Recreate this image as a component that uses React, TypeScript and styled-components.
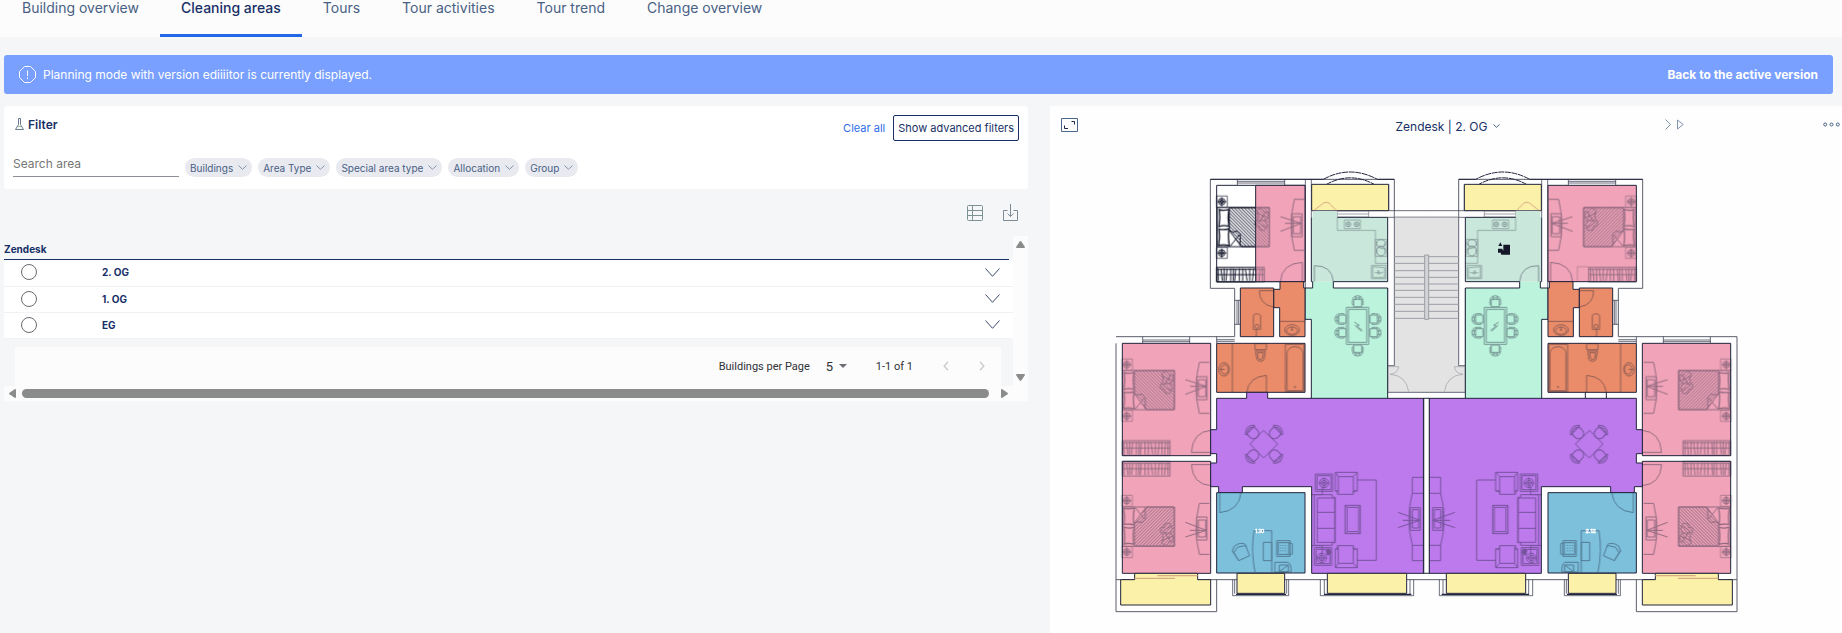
import React from "react";
import styled, { createGlobalStyle, css } from "styled-components";

const navy = "#172f66";
const slate = "#486084";

const GlobalStyle = createGlobalStyle`
  * { box-sizing: border-box; }
  body {
    margin: 0;
    background: #f5f6f8;
    color: ${navy};
    font-family: Inter, "Liberation Sans", sans-serif;
    font-size: 12px;
  }
  button, input, select { font-family: inherit; }
`;

const buttonReset = css`
  padding: 0;
  border: 0;
  background: none;
  cursor: pointer;
`;

const Page = styled.div`
  min-height: 100vh;
  overflow: hidden;
  display: flex;
  flex-direction: column;
`;

const TabBar = styled.nav`
  display: flex;
  height: 37px;
  padding-left: 1px;
  background: #fcfcfc;
`;

const Tab = styled.a<{ $active?: boolean }>`
  padding: 0 21px;
  line-height: 16px;
  font-size: 14px;
  text-decoration: none;
  white-space: nowrap;
  color: ${(p) => (p.$active ? navy : slate)};
  font-weight: ${(p) => (p.$active ? 500 : 400)};
  border-bottom: 3px solid ${(p) => (p.$active ? "#2168e8" : "transparent")};
`;

const Banner = styled.div`
  display: flex;
  align-items: center;
  gap: 7px;
  height: 39px;
  margin: 18px 9px 12px 4px;
  padding: 0 15px;
  border-radius: 3px;
  background: #7aa0ff;
  color: #fff;
  font-size: 12px;
`;

const BannerAction = styled.button`
  ${buttonReset}
  margin-left: auto;
  color: #fff;
  font-size: 12px;
  font-weight: 700;
`;

const Columns = styled.main`
  flex: 1;
  display: grid;
  grid-template-columns: minmax(0, 128fr) minmax(0, 99fr);
  gap: 22px;
  padding-left: 4px;
`;

const FilterCard = styled.section`
  height: 83px;
  padding: 9px 9px 0;
  border-radius: 3px;
  background: #fff;
`;

const FilterHead = styled.div`
  display: flex;
  align-items: center;
  height: 26px;
`;

const FilterTitle = styled.h2`
  display: flex;
  align-items: center;
  gap: 4px;
  margin: 0 auto 8px 2px;
  font-size: 12px;
  font-weight: 600;
`;

const ClearButton = styled.button`
  ${buttonReset}
  margin-right: 8px;
  color: #2f6bea;
  font-size: 11px;
`;

const OutlineButton = styled.button`
  height: 26px;
  padding: 0 4px;
  border: 1px solid ${navy};
  border-radius: 2px;
  background: #fff;
  color: ${navy};
  font-size: 11px;
  cursor: pointer;
`;

const FilterRow = styled.div`
  display: flex;
  align-items: flex-end;
  gap: 6px;
  height: 36px;
`;

const SearchInput = styled.input`
  width: 166px;
  height: 24px;
  padding: 0 0 2px;
  border: 0;
  border-bottom: 1px solid #8b8e99;
  outline: 0;
  font-size: 12px;
  color: ${navy};
  &::placeholder { color: #767676; opacity: 1; }
`;

const Chip = styled.button`
  ${buttonReset}
  display: flex;
  align-items: center;
  gap: 5px;
  height: 19px;
  padding: 0 5px;
  border-radius: 10px;
  background: #e8eaf0;
  color: ${slate};
  font-size: 10px;
  white-space: nowrap;
`;

const Toolbar = styled.div`
  display: flex;
  justify-content: flex-end;
  gap: 20px;
  height: 47px;
  padding: 15px 10px 0 0;
`;

const IconButton = styled.button`
  ${buttonReset}
  display: flex;
  align-items: center;
  justify-content: center;
  height: 17px;
  color: ${slate};
`;

const ScrollFrame = styled.section`
  display: grid;
  grid-template-columns: minmax(0, 1fr) 15px;
  grid-template-rows: auto 15px;
  background: #fcfcfc;
`;

const ScrollContent = styled.div`
  background: #f5f6f8;
`;

const AreaTable = styled.table`
  width: 100%;
  border-collapse: collapse;
  font-size: 10px;
  font-weight: 700;
  caption {
    height: 24px;
    margin-right: 4px;
    padding-top: 5px;
    border-bottom: 1px solid ${navy};
    line-height: 16px;
    text-align: left;
  }
`;

const AreaRow = styled.tr`
  height: 26px;
  background: #fff;
  border-bottom: 1px solid #f2f2f4;
  td { padding: 0 0 1px; vertical-align: middle; }
  td:first-child { width: 98px; padding-left: 17px; }
  td:last-child { width: 28px; }
`;

const Radio = styled.input`
  display: block;
  appearance: none;
  width: 16px;
  height: 16px;
  margin: 0;
  border: 1px solid #686a70;
  border-radius: 50%;
  background: #fff;
`;

const Pagination = styled.div`
  display: flex;
  align-items: center;
  justify-content: flex-end;
  height: 39px;
  margin: 8px 12px 0 11px;
  padding-right: 16px;
  background: #fcfcfc;
  color: #303136;
  font-family: Roboto, sans-serif;
  font-size: 11px;
`;

const PageSize = styled.span`
  display: flex;
  align-items: center;
  gap: 5px;
  margin: 0 29px 0 16px;
`;

const PageSelect = styled.select`
  appearance: none;
  padding: 0;
  border: 0;
  background: none;
  color: inherit;
  font-size: 13px;
`;

const PagerButtons = styled.span`
  display: flex;
  gap: 30px;
  margin-left: 30px;
`;

const VerticalBar = styled.div`
  display: flex;
  flex-direction: column;
  align-items: center;
  justify-content: space-between;
  padding: 4px 0;
`;

const HorizontalBar = styled.div`
  display: flex;
  align-items: center;
  gap: 5px;
  padding: 0 4px;
`;

const Thumb = styled.div`
  flex: 1;
  height: 9px;
  margin-right: 6px;
  border-radius: 5px;
  background: #8a8c8b;
`;

const PlanPanel = styled.section`
  background: #fefefe;
`;

const PlanHead = styled.header`
  display: grid;
  grid-template-columns: 1fr auto 1fr;
  align-items: center;
  height: 54px;
  padding: 0 2px 14px 6px;
`;

const PlanTitle = styled.button`
  ${buttonReset}
  display: flex;
  align-items: center;
  gap: 6px;
  color: ${navy};
  font-size: 12px;
`;

const PlanTools = styled.div`
  display: flex;
  align-items: center;
  justify-content: space-between;
  padding: 0 0 3px 5px;
`;

const ActionTools = styled(PlanTools)`
  padding-left: 165px;
`;

const PlanSvg = styled.svg`
  display: block;
  width: 100%;
  height: auto;
`;

const Chevron = ({ w, h, color = slate }: { w: number; h: number; color?: string }) => (
  <svg width={w} height={h} viewBox={`0 0 ${w} ${h}`} fill="none" stroke={color} aria-hidden="true">
    <path d={`M.5 .5L${w / 2} ${h - 0.7}L${w - 0.5} .5`} />
  </svg>
);

const Arrow = ({ turn }: { turn: number }) => (
  <svg width="9" height="9" viewBox="0 0 9 9" fill="#8a8c8b" aria-hidden="true">
    <path transform={`rotate(${turn} 4.5 4.5)`} d="M3.7 1.5Q4.5 .6 5.3 1.5L9 7Q9 8 8 8H1Q0 8 0 7Z" />
  </svg>
);

const wall = "#22253d";
const pink = "#f1a4b9";
const orange = "#ea8c69";
const purple = "#bd7aed";
const yellow = "#fcf1a8";

/** A room outline with its floor colour. */
const Room = ({ d, fill }: { d: string; fill: string }) => (
  <path d={d} fill={fill} stroke={wall} strokeWidth="3" />
);

/** Bed, night stands, pillows and TV board of one bedroom. */
const BedroomSet = () => (
  <g>
    <path d="M352 142H508V260H352Z" />
    <path d="M388 143H508V260H424L388 212Z" fill="url(#hatch)" />
    <path d="M388 212L400 216 410 213 421 222 420 258M391 258L418 224" />
    <path d="M358 149Q371 153 387 148 382 170 387 199 370 194 357 200 361 172 358 149ZM357 207Q371 211 387 206 383 229 388 257 370 252 356 256 361 230 357 207Z" strokeWidth="4" />
    <path d="M470 152Q485 137 492 156 510 151 504 170 502 180 494 180 510 200 493 211 476 214 478 198 462 204 467 183 480 178 470 152ZM472 160L500 172M496 158L474 190M478 190L500 204M494 181L470 183" />
    <path d="M350 108H382V142H350ZM350 262H382V295H350Z" strokeWidth="2" />
    <circle cx="365" cy="125" r="10" /><circle cx="365" cy="125" r="5" /><path d="M352 125H379M365 112V139" />
    <circle cx="365" cy="279" r="10" /><circle cx="365" cy="279" r="5" /><path d="M352 279H379M365 266V293" />
    <path d="M613 118H583Q564 195 583 271H613" />
    <path d="M575 161H606V230H575ZM580 170H602V221H580Z" />
    <path d="M541 170L604 190 541 214M555 190H604" />
  </g>
);

const Wardrobe = ({ x, y }: { x: number; y: number }) => (
  <g transform={`translate(${x} ${y})`}>
    <path d="M0 0H143V44H0ZM0 22H143M0 6H143" />
    <path d="M5 3V41M13 6L17 40M22 3V41M31 4L28 40M42 3V41M50 3V41M57 5L54 41M68 3V41M78 3V41M86 4L91 40M99 3V41M111 3L107 41M119 3V41M130 4L127 41M137 3V41" strokeWidth="3" />
  </g>
);

const DiningChair = ({ x, y, turn }: { x: number; y: number; turn: number }) => (
  <g transform={`translate(${x} ${y}) rotate(${turn})`}>
    <path d="M-12 -8V14H12V-8ZM-16 -4V8H-12M16 -4V8H12M-16 -4Q-15 -18 0 -19 15 -18 16 -4M-12 -6Q-8 -13 0 -13 8 -13 12 -6M-6 -18V-8M6 -18V-8" />
  </g>
);

const RoundChair = ({ x, y, turn }: { x: number; y: number; turn: number }) => (
  <g transform={`translate(${x} ${y}) rotate(${turn})`}>
    <path d="M-14 -10Q-18 8 -11 15L-4 19H4L11 15Q18 8 14 -10ZM-19 -12Q0 -32 19 -12L16 -8Q0 -24 -16 -8Z" />
  </g>
);

const Armchair = ({ flip }: { flip?: boolean }) => (
  <g transform={flip ? "matrix(1 0 0 -1 0 2160)" : undefined}>
    <path d="M706 937H772V993H760V1003H712V993H706ZM715 1000V950H760V1000M706 937L715 950M772 937L760 950M706 993H715M760 993H772" />
  </g>
);

/** One flat; the other one is the same drawing mirrored on the stairwell. */
const Flat = ({ mirrored }: { mirrored?: boolean }) => (
  <g fill="none" stroke={wall} strokeWidth="2">
    <path d="M331 385V58H883V152M331 385H404V530M48 530H404M48 550V1355H350V1259M48 1259H980" stroke="#5c5e6b" strokeWidth="3" />
    {mirrored && <path d="M48 530V550" stroke="#5c5e6b" strokeWidth="3" />}
    <path d="M331 58H670M832 58H883" strokeWidth="3" />
    <path d="M616 58V384M634 58V172M866 73V152M883 152V617H863M807 152H980M863 172H883M863 384V697H980M971 715V1240H989V715Z" strokeWidth="2" />
    <path d="M670 58Q750 14 832 58M678 74Q752 32 828 76" strokeWidth="3" strokeDasharray="18 2" />
    <path d="M412 58V75M554 58V75M412 64H554M412 69H554M128 530V549M269 530V549M128 540H269M128 545H269M350 539H404M350 544H404M350 530V549M404 421H421M404 493H421M411 421V493M416 421V493" />
    <path d="M398 1259V1307H566V1259M404 1259V1301M560 1259V1301M661 1259V1307H941V1259M673 1259V1303M930 1259V1303" />
    <path d="M408 1303H558M672 1303H934" strokeWidth="4" />
    <path d="M712 153H806V171H712ZM712 162H806" stroke="#73777e" />

    {mirrored ? (
      <Room d="M350 76H615V365H350Z" fill={pink} />
    ) : (
      <>
        <Room d="M350 76H615V365H350Z" fill="#fff" />
        <Room d="M467 76H615V365H467Z" fill={pink} />
      </>
    )}
    <Room d="M635 73H866V152H635Z" fill={yellow} />
    <path d="M638 152H712V172H863V365H634V172H638Z" fill="#c9e7da" stroke="none" />
    <path d="M712 172H863V365H700M638 365H634V172" strokeWidth="3" />
    <path d="M638 365H700V384H863V715H634V478H615V384H638Z" fill="#bbf3dc" stroke="none" />
    <path d="M700 365V384H863V715M638 365V384H615V478H634V715" strokeWidth="3" />
    <Room d="M540 365H611V384H615V530H539V443H521V388H540Z" fill={orange} />
    <Room d="M421 384H521V530H421Z" fill={orange} />
    <Room d="M350 550H615V697H350Z" fill={orange} />
    <Room d="M67 550H332V887H67Z" fill={pink} />
    <Room d="M67 904H332V1240H67Z" fill={pink} />
    <Room
      d={`M350 715${mirrored ? "" : "H440V697H503V715"}H971V1240H635V980H427V998H356V980H332V909H350V881H332V809H350Z`}
      fill={purple}
    />
    {mirrored && <path d="M440 697V715M503 697V715" strokeWidth="3" />}
    <Room d="M350 998H615V1239H350Z" fill="#7cc0dc" />
    <Room d="M104 1240H293V1259H332V1335H62V1259H104Z" fill={yellow} />
    <Room d="M411 1240H554V1300H411Z" fill={yellow} />
    <Room d="M682 1240H920V1300H682Z" fill={yellow} />

    <g opacity="0.45" strokeWidth="3">
      <g clipPath={mirrored ? undefined : "url(#pinkPart)"}>
        <BedroomSet />
        <Wardrobe x={350} y={322} />
      </g>
      {mirrored && <path d="M493 320H527V363" opacity="0.5" />}
      <g transform="translate(-285 489)"><BedroomSet /></g>
      <g transform="matrix(1 0 0 -1 -285 1301)"><BedroomSet /></g>
      <Wardrobe x={67} y={842} />
      <Wardrobe x={67} y={904} />
      <path d="M607 365V307Q545 310 541 365M332 811Q278 815 274 877H332M332 977Q278 973 274 914H332" />

      <path d="M638 154L672 128Q680 124 688 130L712 154" stroke="#a54f5a" />
      <path d="M712 172V211H826V310H863M733 180H781V206H733ZM826 238H860V289H826ZM814 316H858V356H814Z" strokeWidth="2" />
      <circle cx="745" cy="193" r="7" /><circle cx="770" cy="193" r="7" /><circle cx="745" cy="193" r="2" /><circle cx="770" cy="193" r="2" />
      <ellipse cx="843" cy="250" rx="13" ry="11" /><ellipse cx="843" cy="273" rx="13" ry="15" />
      <path d="M832 262L858 268M850 256L858 250M818 320L854 323V352H818ZM824 338H840L834 331V342L850 336" strokeWidth="2" />
      <path d="M643 365V317Q696 316 700 365" />

      <path d="M739 442H806V553H739ZM745 448H800V547H745ZM763 486L778 496 770 498 788 512M764 495L784 514" />
      <DiningChair x={773} y={426} turn={0} />
      <DiningChair x={773} y={569} turn={180} />
      <DiningChair x={724} y={477} turn={-90} />
      <DiningChair x={724} y={518} turn={-90} />
      <DiningChair x={824} y={477} turn={90} />
      <DiningChair x={824} y={518} turn={90} />

      <path d="M521 392H478Q478 434 521 441M469 530V508M460 466Q471 456 482 466V508H460ZM539 484H615" />
      <circle cx="471" cy="499" r="6" />
      <ellipse cx="576" cy="510" rx="22" ry="16" /><ellipse cx="576" cy="512" rx="16" ry="11" /><path d="M572 510H580M576 500V510" />
      <path d="M397 550V697M465 551H499V569H465ZM466 573H496L492 599Q482 609 471 599ZM472 578H490L487 596Q482 602 475 596ZM556 553H612V695H556ZM561 692V580Q564 560 585 560 606 560 609 580V692Z" />
      <ellipse cx="372" cy="628" rx="16" ry="20" /><ellipse cx="374" cy="628" rx="11" ry="14" /><path d="M358 628H374" />
      <circle cx="585" cy="681" r="2" />
      <path d="M440 697Q446 650 499 646V697" />

      <path d="M490 811L533 852 491 894 450 852Z" />
      <RoundChair x={458} y={818} turn={-45} />
      <RoundChair x={526} y={818} turn={45} />
      <RoundChair x={458} y={888} turn={-135} />
      <RoundChair x={526} y={888} turn={135} />

      <Armchair /><Armchair flip />
      <path d="M646 942H698V994H646ZM651 947H693V989H651ZM643 1163H695V1216H643ZM648 1168H690V1211H648ZM772 960H829V1201H772M667 980V1004H635M667 1180V1157H635" />
      <circle cx="672" cy="969" r="14" /><circle cx="672" cy="969" r="8" /><path d="M656 969H688M672 953V985" />
      <circle cx="665" cy="1194" r="14" /><circle cx="665" cy="1194" r="8" /><path d="M649 1194H681M665 1178V1210" />
      <path d="M678 1172Q684 1162 692 1172 697 1180 686 1184 678 1188 680 1178Z" fill={wall} />
      <path d="M643 1004H697V1012H706V1148H697V1156H643ZM652 1014H704V1147H652ZM652 1057H704M652 1105H704" />
      <path d="M735 1036H781V1121H735ZM741 1042H776V1115H741ZM735 1036L741 1042M781 1036L776 1042M735 1121L741 1115M781 1121L776 1115" />
      <path d="M971 952H937V1000Q916 1078 937 1156V1202H971M937 1000H971M937 1156H971M931 1043H961V1111H931ZM937 1049H956V1104H937ZM894 1057L960 1081 894 1103M908 1081H960" />

      <path d="M359 998V1058Q418 1052 423 998" />
      <path d="M465 1236Q452 1174 462 1112H515V1237M490 1147H515V1202H490Z" />
      <path d="M397 1173L403 1158Q422 1145 436 1153L446 1181 449 1187 416 1202ZM402 1178L412 1162 432 1157 440 1161M397 1173L402 1178 416 1202" />
      <path d="M530 1142H570V1189H530ZM534 1148H566V1183H534ZM566 1148L577 1151V1182L566 1185M524 1207H565Q575 1215 573 1236H524ZM538 1215H565V1235H538ZM538 1235L565 1215" />
      <path d="M540 1155V1178M548 1155V1178M556 1155V1178" strokeDasharray="3 5" />
    </g>
    {!mirrored && (
      <g clipPath="url(#whitePart)" stroke="#14172a" strokeWidth="3">
        <BedroomSet />
        <Wardrobe x={350} y={322} />
      </g>
    )}
    <path d="M172 1247H293M104 1255H225" stroke="#d6ac82" strokeWidth="4" />
  </g>
);

const FloorPlan = () => (
  <PlanSvg viewBox="-150 0 2376 1419" role="img" aria-label="Floor plan of Zendesk, 2. OG">
    <defs>
      <pattern id="hatch" width="7" height="7" patternUnits="userSpaceOnUse" patternTransform="rotate(-45)">
        <path d="M0 0V7" stroke={wall} strokeWidth="5" />
      </pattern>
      <clipPath id="whitePart"><path d="M340 60H467V380H340Z" /></clipPath>
      <clipPath id="pinkPart"><path d="M467 60H620V380H467Z" /></clipPath>
    </defs>
    <path d="M883 172H1076V617H1096V697H863V617H883Z" fill="#e3e3e3" />
    <Flat />
    <g transform="translate(1959 0) scale(-1 1)"><Flat mirrored /></g>
    <g fill="none" stroke="#9c9ea4" strokeWidth="3">
      {[290, 310, 332, 352, 372, 391, 412, 433, 454, 475].map((y) => (
        <path key={y} d={`M883 ${y}H1076`} />
      ))}
      <path d="M974 285H986V478H974Z" fill="#d3d4d6" />
      <path d="M865 620H896Q894 640 870 643 918 645 926 695M1094 620H1063Q1065 640 1089 643 1041 645 1033 695" strokeWidth="2" />
      <path d="M883 171H1076" stroke="#6b6d78" />
    </g>
    <path d="M1195 258L1201 247 1207 258ZM1194 266H1206L1210 272V254H1230V284H1204L1202 278H1194Z" fill="#151829" />
    <g fill="#fff" stroke="#fff" strokeWidth="1" fontSize="16" fontWeight="700" textAnchor="middle">
      <text x="479" y="1120">1.10</text>
      <text x="1472" y="1120">2.12</text>
    </g>
  </PlanSvg>
);

const tabs = ["Building overview", "Cleaning areas", "Tours", "Tour activities", "Tour trend", "Change overview"];
const chips = ["Buildings", "Area Type", "Special area type", "Allocation", "Group"];
const floors = ["2. OG", "1. OG", "EG"];

export default function App() {
  return (
    <Page>
      <GlobalStyle />
      <TabBar>
        {tabs.map((t) => (
          <Tab key={t} href="#" $active={t === "Cleaning areas"}>{t}</Tab>
        ))}
      </TabBar>
      <Banner>
        <svg width="17" height="17" viewBox="0 0 17 17" fill="none" stroke="#fff" aria-hidden="true">
          <path d="M5.5 .5H11.5L16.5 5.5V11.5L11.5 16.5H5.5L.5 11.5V5.5ZM8.5 4.5V10M8.5 11.5V13" />
        </svg>
        <span>Planning mode with version ediiiitor is currently displayed.</span>
        <BannerAction>Back to the active version</BannerAction>
      </Banner>
      <Columns>
        <div>
          <FilterCard>
            <FilterHead>
              <FilterTitle>
                <svg width="9" height="12" viewBox="0 0 9 12" fill="none" stroke="#6b7a90" aria-hidden="true">
                  <path d="M3.5 .5H5.5V6.5L8.5 11.5H.5L3.5 6.5Z" />
                  <path d="M3 8.5H6" stroke="#9bc08a" />
                </svg>
                Filter
              </FilterTitle>
              <ClearButton>Clear all</ClearButton>
              <OutlineButton>Show advanced filters</OutlineButton>
            </FilterHead>
            <FilterRow>
              <SearchInput placeholder="Search area" aria-label="Search area" />
              {chips.map((c) => (
                <Chip key={c}>{c}<Chevron w={9} h={5} color="#8294a8" /></Chip>
              ))}
            </FilterRow>
          </FilterCard>
          <Toolbar>
            <IconButton aria-label="Columns">
              <svg width="16" height="16" viewBox="0 0 16 16" fill="none" stroke="#7d9292">
                <rect x=".5" y=".5" width="15" height="15" rx="1" />
                <path d="M5.5 .5V15.5M.5 5.5H15.5M.5 10.5H15.5" />
              </svg>
            </IconButton>
            <IconButton aria-label="Download">
              <svg width="15" height="17" viewBox="0 0 15 17" fill="none" stroke="#7d8a97">
                <path d="M4.5 6.5H.5V16.5H14.5V6.5H10.5M7.5 0V12.5M4.5 9.5L7.5 12.5L10.5 9.5" />
              </svg>
            </IconButton>
          </Toolbar>
          <ScrollFrame>
            <ScrollContent>
              <AreaTable>
                <caption>Zendesk</caption>
                <tbody>
                  {floors.map((f) => (
                    <AreaRow key={f}>
                      <td><Radio type="radio" name="floor" aria-label={f} /></td>
                      <td>{f}</td>
                      <td><IconButton aria-label={`Expand ${f}`}><Chevron w={15} h={9} color="#3c4a6b" /></IconButton></td>
                    </AreaRow>
                  ))}
                </tbody>
              </AreaTable>
              <Pagination>
                <label htmlFor="page-size">Buildings per Page</label>
                <PageSize>
                  <PageSelect id="page-size"><option>5</option></PageSelect>
                  <svg width="8" height="4" viewBox="0 0 8 4" fill="#6b6d72" aria-hidden="true"><path d="M0 0H8L4 4Z" /></svg>
                </PageSize>
                <span>1-1 of 1</span>
                <PagerButtons>
                  {["M5 .8L1.2 5L5 9.2", "M1 .8L4.8 5L1 9.2"].map((d, i) => (
                    <IconButton key={d} disabled aria-label={i ? "Next page" : "Previous page"}>
                      <svg width="6" height="10" viewBox="0 0 6 10" fill="none" stroke="#c9cacc" strokeWidth="1.4"><path d={d} /></svg>
                    </IconButton>
                  ))}
                </PagerButtons>
              </Pagination>
            </ScrollContent>
            <VerticalBar aria-hidden="true"><Arrow turn={0} /><Arrow turn={180} /></VerticalBar>
            <HorizontalBar aria-hidden="true"><Arrow turn={-90} /><Thumb /><Arrow turn={90} /></HorizontalBar>
          </ScrollFrame>
        </div>
        <PlanPanel>
          <PlanHead>
            <PlanTools>
              <IconButton aria-label="Full screen">
                <svg width="17" height="14" viewBox="0 0 17 14" fill="none" stroke="#4c678c">
                  <path d="M.5 .5H16.5V13.5H.5Z" />
                  <path d="M3.5 7.5V10.5H7M10.5 3.5H13.5V6.5" stroke="#1d2747" />
                </svg>
              </IconButton>
            </PlanTools>
            <PlanTitle>Zendesk | 2. OG <Chevron w={7} h={4} /></PlanTitle>
            <ActionTools>
              <IconButton aria-label="Show tours">
                <svg width="19" height="11" viewBox="0 0 19 11" fill="none" stroke="#8093ab">
                  <path d="M.5 .5L5.5 5.5L.5 10.5M12.5 1L18.2 5.5L12.5 10Z" />
                </svg>
              </IconButton>
              <IconButton aria-label="More options">
                <svg width="17" height="5" viewBox="0 0 17 5" fill="none" stroke={slate}>
                  <circle cx="2.2" cy="2.5" r="1.5" /><circle cx="8.5" cy="2.5" r="1.5" /><circle cx="14.8" cy="2.5" r="1.5" />
                </svg>
              </IconButton>
            </ActionTools>
          </PlanHead>
          <FloorPlan />
        </PlanPanel>
      </Columns>
    </Page>
  );
}
